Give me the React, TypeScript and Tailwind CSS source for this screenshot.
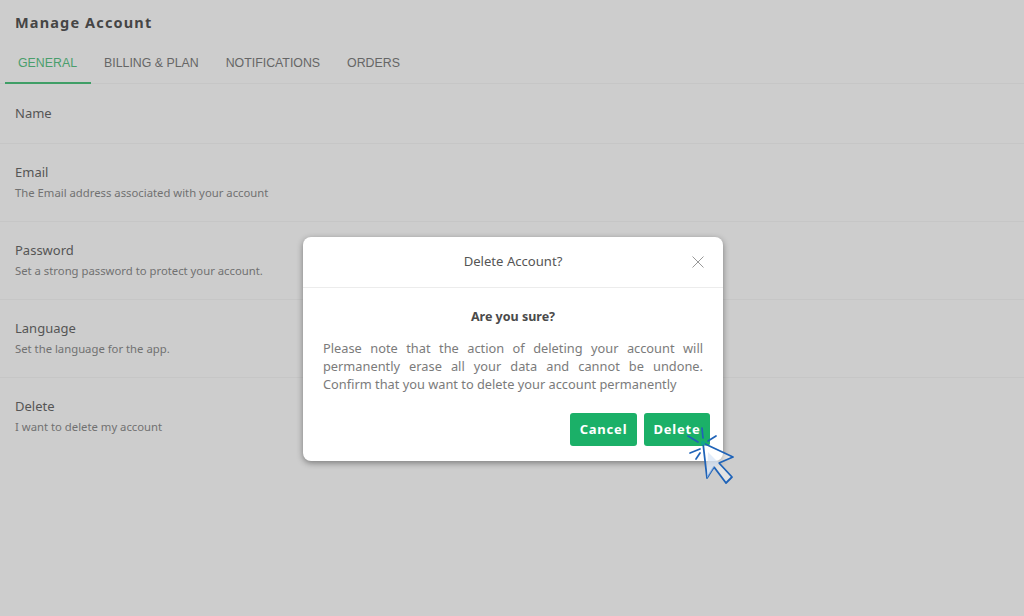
const plex = "font-['Noto_Sans',sans-serif]";

const rows = [
  { title: 'Email', desc: 'The Email address associated with your account' },
  { title: 'Password', desc: 'Set a strong password to protect your account.' },
  { title: 'Language', desc: 'Set the language for the app.' },
  { title: 'Delete', desc: 'I want to delete my account', last: true },
];

const tabs = ['BILLING & PLAN', 'NOTIFICATIONS', 'ORDERS'];

function ClickCursor() {
  return (
    <svg className="absolute left-[684px] top-[426px]" width="52" height="60" viewBox="0 0 52 60" fill="none">
      <path d="M19 17 L49 31 L35 37 L48 51 L42 57 L30 41 L23 52 Z" fill="#ffffff" fillOpacity="0.45" stroke="#1f63b8" strokeWidth="1.8" strokeLinejoin="round" />
      <path d="M35 37 L24 26 L23 52 L30 41 Z" fill="#cfe0f5" fillOpacity="0.6" />
      <g stroke="#1f63b8" strokeWidth="1.7" strokeLinecap="round">
        <path d="M18 2 L19 12" />
        <path d="M32 10 L24 15" />
        <path d="M4 10 L14 16" />
        <path d="M6 27 L16 23" />
        <path d="M12 33 L16 27" />
      </g>
      <circle cx="19" cy="17" r="2.2" fill="#12a58a" />
    </svg>
  );
}

export default function App() {
  return (
    <div className={`relative h-[616px] w-[1024px] overflow-hidden bg-[#cdcdcd] ${plex}`}>
      <h1 className="pl-[15px] pt-[13px] text-[14.5px] leading-[18px] font-bold tracking-[1.15px] text-[#454545]">Manage Account</h1>

      <div className="mt-[17px] flex h-[36px] items-start border-b border-[#c6c6c6] pl-[5px] font-['Liberation_Sans',sans-serif] text-[12.35px] leading-[30px] text-[#666666]">
        <div className="h-[36px] w-[86px] border-b-2 border-[#3f9e66] pl-[13px] text-[#4a9e6c]">GENERAL</div>
        <div className="ml-[13px] flex gap-[27px]">
          {tabs.map(t => <span key={t}>{t}</span>)}
        </div>
      </div>

      <div className="h-[60px] border-b border-[#c6c6c6] pl-[15px] pt-[19px] text-[13px] leading-[20px] text-[#555555]">Name</div>

      {rows.map(r => (
        <div key={r.title} className={r.last ? 'h-[78px] pl-[15px] pt-[18px]' : 'h-[78px] border-b border-[#c6c6c6] pl-[15px] pt-[18px]'}>
          <p className="text-[13px] leading-[20px] text-[#555555]">{r.title}</p>
          <p className="mt-[1px] text-[11.3px] leading-[20px] text-[#717171]">{r.desc}</p>
        </div>
      ))}

      <div className="absolute left-[303px] top-[237px] h-[224px] w-[420px] rounded-[8px] bg-white shadow-[0_2px_6px_rgba(0,0,0,0.4)]">
        <div className="relative flex h-[51px] items-center justify-center border-b border-[#ececec] text-[13.1px] text-[#555555]">
          Delete Account?
          <svg className="absolute right-[19px] top-[19px]" width="12" height="12" viewBox="0 0 12 12" fill="none" stroke="#8c8c8c" strokeWidth="0.9">
            <path d="M0.5 0.5 L11.5 11.5 M11.5 0.5 L0.5 11.5" />
          </svg>
        </div>
        <p className="mt-[20px] text-center text-[12.5px] leading-[18px] font-bold text-[#4a4a4a]">Are you sure?</p>
        <div className="mx-[20px] mt-[13px] text-[12.8px] leading-[18px] text-[#7b7b7b]">
          <p className="[text-align-last:justify]">Please note that the action of deleting your account will</p>
          <p className="[text-align-last:justify]">permanently erase all your data and cannot be undone.</p>
          <p>Confirm that you want to delete your account permanently</p>
        </div>
        <div className="mt-[20px] flex justify-end gap-[7px] pr-[13px]">
          <button className="h-[33px] w-[67px] rounded-[3px] bg-[#1bb068] text-[13px] font-bold tracking-[0.8px] text-white">Cancel</button>
          <button className="h-[33px] w-[66px] rounded-[3px] bg-[#1bb068] text-[13px] font-bold tracking-[0.8px] text-white">Delete</button>
        </div>
      </div>

      <ClickCursor />
    </div>
  );
}
